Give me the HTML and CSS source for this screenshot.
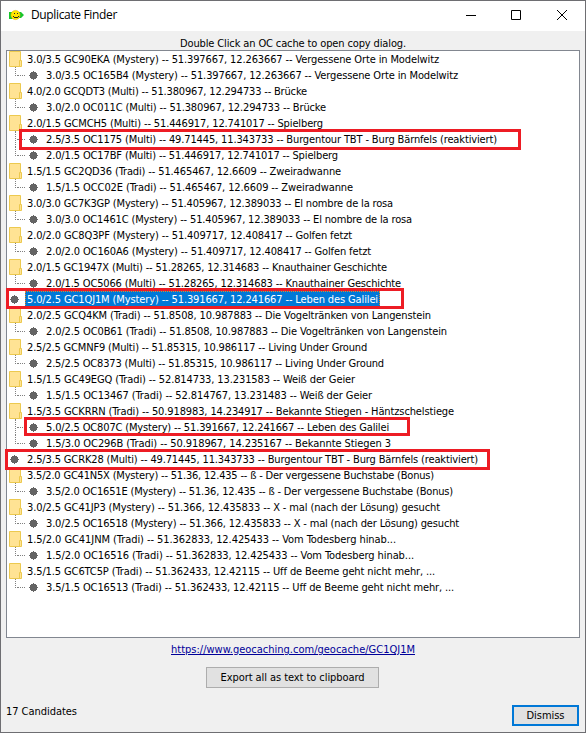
FILE: index.html
```html
<!DOCTYPE html>
<html lang="en">
<head>
<meta charset="utf-8">
<title>Duplicate Finder</title>
<link rel="stylesheet" href="styles.css">
</head>
<body>
<svg class="defs" aria-hidden="true">
  <symbol id="folder" viewBox="0 0 13 16"><path d="M.5.5h11v15H.5z" fill="#ffe394" stroke="#ecc94f"/><path d="M10.5 9.5h2v6h-2z" fill="#ffe394" stroke="#ecc94f"/></symbol>
  <symbol id="dot" viewBox="0 0 9 9"><path d="M4 0h1v1h2v1h1v2h1v1H8v2H7v1H5v1H4V8H2V7H1V5H0V4h1V2h1V1h2z" fill="#646464"/></symbol>
</svg>
<div class="window">
  <header class="titlebar">
    <svg class="logo" width="16" height="16" viewBox="0 0 16 16"><path d="M0 5h3l2 2v3l-2 2H0V5zM12 5l3 3-3 3h-2V5z" fill="#17c52c"/><circle cx="6.500" cy="8" r="4.600" fill="#ffe500" stroke="#d2b000" stroke-width=".5"/><path d="M5 6h1v1H5zM8 6h1v1H8zM4 9h1v1h4V9h1v1H9v1H5v-1H4z" fill="#222"/></svg>
    <h1 class="title fit" data-width="86">Duplicate Finder</h1>
    <svg class="controls" width="102" height="12" viewBox="0 0 102 12"><path d="M0 6.500h10M45.500 1.500h9v9h-9z" fill="none" stroke="#000"/><path d="m91 1 10 10m0-10L91 11" fill="none" stroke="#000"/></svg>
  </header>
  <main class="content">
    <p class="hint"><span class="fit" data-width="226">Double Click an OC cache to open copy dialog.</span></p>
    <div class="tree" id="tree"></div>
    <p class="link"><a class="fit" data-width="244">https://www.geocaching.com/geocache/GC1QJ1M</a></p>
    <div class="export"><button><span class="fit" data-width="144">Export all as text to clipboard</span></button></div>
    <footer class="footer"><span class="count fit" data-width="71">17 Candidates</span><button class="dismiss"><span class="fit" data-width="38">Dismiss</span></button></footer>
  </main>
</div>
<script src="tree.js"></script>
</body>
</html>
```
FILE: styles.css
```css
* { box-sizing: border-box; }
body { margin: 0; background: #fff; color: #000; font: 11px/16px "DejaVu Sans Condensed", "DejaVu Sans", sans-serif; font-stretch: condensed; }
h1, p { margin: 0; font-weight: normal; }
.defs { position: absolute; width: 0; height: 0; }
.window { width: 586px; height: 733px; border: 1px solid #6e6e72; background: #f0f0f0; display: flex; flex-direction: column; }
.titlebar { height: 30px; background: #fff; display: flex; align-items: center; padding: 0 17px 2px 8px; flex: none; }
.title { margin-left: 6px; font: 12px/16px "Open Sans", "Noto Sans", sans-serif; }
.controls { margin-left: auto; }
.content { flex: 1; display: flex; flex-direction: column; padding: 0 5px; }
.hint { height: 19px; padding-top: 6px; line-height: 13px; text-align: center; }
.fit { display: inline-block; white-space: pre; }
.tree { height: 588px; border: 1px solid #828790; background: #fff; flex: none; }
.row { display: flex; height: 16px; position: relative; }
.folder { width: 13px; height: 16px; margin: 0 3px 0 2px; flex: none; }
.dot { width: 9px; height: 9px; margin: 4px 6px 0 3px; flex: none; }
.label { padding: 1px 2px 0; line-height: 16px; height: 16px; }
.label .fit { vertical-align: top; }
.branch { width: 19px; height: 16px; flex: none; position: relative; }
.branch::before { content: ""; position: absolute; left: 8px; top: 0; height: 9px; border-left: 1px dotted #808080; }
.branch.more::before { height: 16px; }
.branch::after { content: ""; position: absolute; left: 10px; top: 8px; width: 8px; border-top: 1px dotted #808080; }
.selected .label { background: #0078d7; color: #fff; outline: 1px dotted #e58728; outline-offset: -1px; }
.mark { position: absolute; top: -2px; height: 21px; border: 3px solid #ed1c24; z-index: 1; }
.selected .mark { top: -3px; }
.mark.slim { height: 19px; }
.link { height: 22px; padding-top: 4px; text-align: center; color: #000099; }
.link a { text-decoration: underline; }
.export { height: 29px; padding: 7px 1px 0 0; text-align: center; }
button { width: 173px; height: 21px; padding: 0; border: 1px solid #adadad; background: #e1e1e1; color: #000; font: inherit; line-height: 18px; }
.footer { margin-top: auto; height: 43px; display: flex; align-items: flex-start; padding: 13px 1px 0 0; }
.count { margin-top: 2px; }
.dismiss { width: 67px; border: 2px solid #0078d7; margin: 3px 0 0 auto; line-height: 16px; }
```
FILE: tree.js
```js
// kind: g = group, l = leaf, r = top-level leaf; then right edge of the text, label, optional mark [left, right, style], row state
const rows = [
  ["g", 439, "3.0/3.5 GC90EKA (Mystery) -- 51.397667, 12.263667 -- Vergessene Orte in Modelwitz"],
  ["l", 458, "3.0/3.5 OC165B4 (Mystery) -- 51.397667, 12.263667 -- Vergessene Orte in Modelwitz"],
  ["g", 307, "4.0/2.0 GCQDT3 (Multi) -- 51.380967, 12.294733 -- Brücke"],
  ["l", 326, "3.0/2.0 OC011C (Multi) -- 51.380967, 12.294733 -- Brücke"],
  ["g", 323, "2.0/1.5 GCMCH5 (Multi) -- 51.446917, 12.741017 -- Spielberg"],
  ["l", 497, "2.5/3.5 OC1175 (Multi) -- 49.71445, 11.343733 -- Burgentour TBT - Burg Bärnfels (reaktiviert)", [19, 521]],
  ["l", 338, "2.0/1.5 OC17BF (Multi) -- 51.446917, 12.741017 -- Spielberg"],
  ["g", 341, "1.5/1.5 GC2QD36 (Tradi) -- 51.465467, 12.6609 -- Zweiradwanne"],
  ["l", 353, "1.5/1.5 OCC02E (Tradi) -- 51.465467, 12.6609 -- Zweiradwanne"],
  ["g", 393, "3.0/3.0 GC7K3GP (Mystery) -- 51.405967, 12.389033 -- El nombre de la rosa"],
  ["l", 412, "3.0/3.0 OC1461C (Mystery) -- 51.405967, 12.389033 -- El nombre de la rosa"],
  ["g", 352, "2.0/2.0 GC8Q3PF (Mystery) -- 51.409717, 12.408417 -- Golfen fetzt"],
  ["l", 371, "2.0/2.0 OC160A6 (Mystery) -- 51.409717, 12.408417 -- Golfen fetzt"],
  ["g", 387, "2.0/1.5 GC1947X (Multi) -- 51.28265, 12.314683 -- Knauthainer Geschichte"],
  ["l", 401, "2.0/1.5 OC5066 (Multi) -- 51.28265, 12.314683 -- Knauthainer Geschichte"],
  ["r", 378, "5.0/2.5 GC1QJ1M (Mystery) -- 51.391667, 12.241667 -- Leben des Galilei", [6, 404], "selected"],
  ["g", 431, "2.0/2.5 GCQ4KM (Tradi) -- 51.8508, 10.987883 -- Die Vogeltränken von Langenstein"],
  ["l", 447, "2.0/2.5 OC0B61 (Tradi) -- 51.8508, 10.987883 -- Die Vogeltränken von Langenstein"],
  ["g", 367, "2.5/2.5 GCMNF9 (Multi) -- 51.85315, 10.986117 -- Living Under Ground"],
  ["l", 384, "2.5/2.5 OC8373 (Multi) -- 51.85315, 10.986117 -- Living Under Ground"],
  ["g", 355, "1.5/1.5 GC49EGQ (Tradi) -- 52.814733, 13.231583 -- Weiß der Geier"],
  ["l", 372, "1.5/1.5 OC13467 (Tradi) -- 52.814767, 13.231483 -- Weiß der Geier"],
  ["g", 454, "1.5/3.5 GCKRRN (Tradi) -- 50.918983, 14.234917 -- Bekannte Stiegen - Häntzschelstiege"],
  ["l", 389, "5.0/2.5 OC807C (Mystery) -- 51.391667, 12.241667 -- Leben des Galilei", [24, 410, "slim"]],
  ["l", 391, "1.5/3.0 OC296B (Tradi) -- 50.918967, 14.235167 -- Bekannte Stiegen 3"],
  ["r", 478, "2.5/3.5 GCRK28 (Multi) -- 49.71445, 11.343733 -- Burgentour TBT - Burg Bärnfels (reaktiviert)", [5, 490]],
  ["g", 434, "3.5/2.0 GC41N5X (Mystery) -- 51.36, 12.435 -- ß - Der vergessene Buchstabe (Bonus)"],
  ["l", 453, "3.5/2.0 OC1651E (Mystery) -- 51.36, 12.435 -- ß - Der vergessene Buchstabe (Bonus)"],
  ["g", 440, "3.0/2.5 GC41JP3 (Mystery) -- 51.366, 12.435833 -- X - mal (nach der Lösung) gesucht"],
  ["l", 459, "3.0/2.5 OC16518 (Mystery) -- 51.366, 12.435833 -- X - mal (nach der Lösung) gesucht"],
  ["g", 396, "1.5/2.0 GC41JNM (Tradi) -- 51.362833, 12.425433 -- Vom Todesberg hinab..."],
  ["l", 414, "1.5/2.0 OC16516 (Tradi) -- 51.362833, 12.425433 -- Vom Todesberg hinab..."],
  ["g", 435, "3.5/1.5 GC6TC5P (Tradi) -- 51.362433, 12.42115 -- Uff de Beeme geht nicht mehr, ..."],
  ["l", 454, "3.5/1.5 OC16513 (Tradi) -- 51.362433, 12.42115 -- Uff de Beeme geht nicht mehr, ..."]
];
const TREE_LEFT = 7;
document.getElementById("tree").innerHTML = rows.map(([kind, end, text, mark, state], i) => {
  const child = kind === "l";
  const more = child && rows[i + 1] && rows[i + 1][0] === "l" ? " more" : "";
  const icon = kind === "g"
    ? '<svg class="folder"><use href="#folder"/></svg>'
    : '<svg class="dot"><use href="#dot"/></svg>';
  return `<div class="row ${state || ""}">`
    + (child ? `<span class="branch${more}"></span>` : "") + icon
    + `<span class="label"><span class="fit" data-width="${end - (child ? 46 : 27)}">${text}</span></span>`
    + (mark ? `<span class="mark ${mark[2] || ""}" style="left:${mark[0] - TREE_LEFT}px;width:${mark[1] - mark[0]}px"></span>` : "")
    + "</div>";
}).join("");

// Spread the letters so each text takes its own width.
document.querySelectorAll(".fit").forEach(el => {
  const spacing = (el.dataset.width - el.getBoundingClientRect().width) / el.textContent.length;
  el.style.letterSpacing = spacing + "px";
});
```
